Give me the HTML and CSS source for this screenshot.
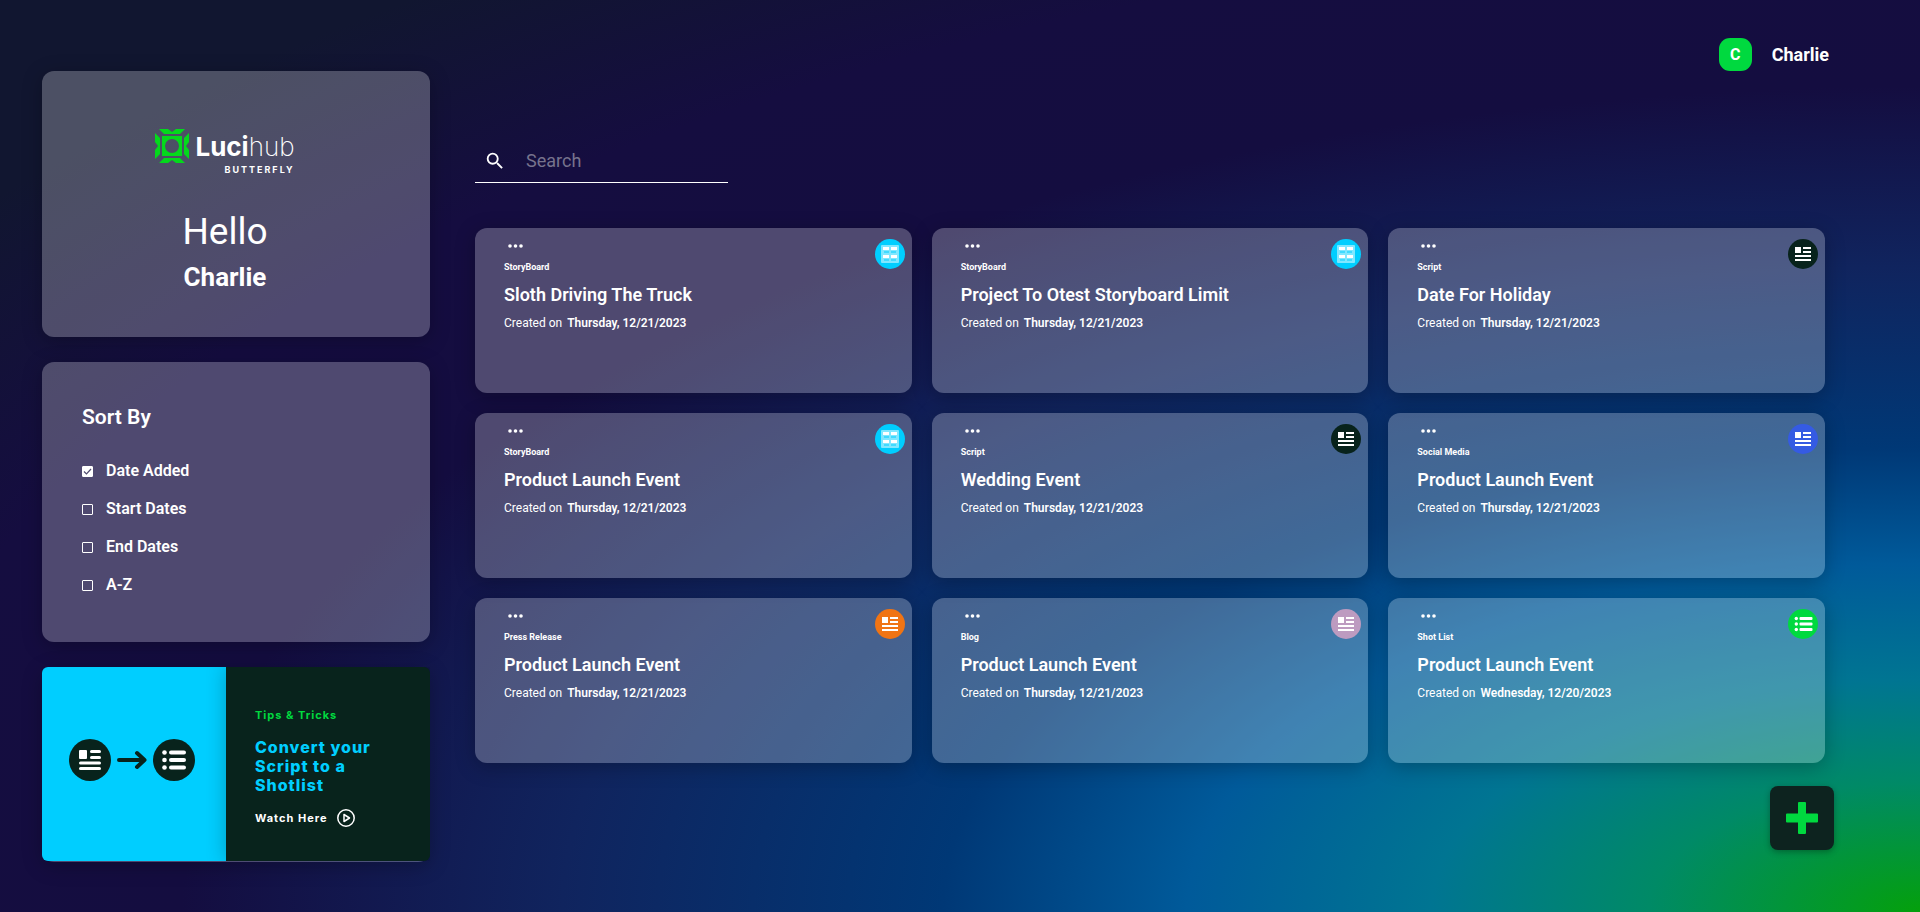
FILE: index.html
```html
<!DOCTYPE html>
<html lang="en">
<head>
<meta charset="utf-8">
<meta name="viewport" content="width=device-width, initial-scale=1">
<title>Lucihub Butterfly</title>
<link rel="stylesheet" href="styles.css">
</head>
<body>
<svg class="sprite" aria-hidden="true">
  <symbol id="dots" viewBox="0 0 16 4"><circle cx="2" cy="2" r="1.8"/><circle cx="7.5" cy="2" r="1.8"/><circle cx="13" cy="2" r="1.8"/></symbol>
  <symbol id="doc" viewBox="0 0 30 30"><path d="M7 8h6v6H7zM15 8h8v2h-8zM15 12h8v2h-8zM7 16h16v2H7zM7 20h16v2H7z"/></symbol>
  <symbol id="list" viewBox="0 0 30 30"><circle cx="8.300" cy="9.500" r="1.700"/><circle cx="8.300" cy="15" r="1.700"/><circle cx="8.300" cy="20.500" r="1.700"/><rect x="11.500" y="8" width="13" height="3" rx="1"/><rect x="11.500" y="13.500" width="13" height="3" rx="1"/><rect x="11.500" y="19" width="13" height="3" rx="1"/></symbol>
  <symbol id="board" viewBox="0 0 30 30"><rect x="6" y="6" width="18" height="18" rx="1" fill-opacity=".5"/><path d="M8 8h6v3H8zM16 8h6v3h-6zM8 16h6v3H8zM16 16h6v3h-6z"/><path d="M9 12.500h5v1H9zM16 12.500h5v1h-5zM9 20.500h5v1H9zM16 20.500h5v1h-5z" fill="#00ceff"/></symbol>
</svg>
<div class="layout">
  <aside class="sidebar">
    <section class="panel hello">
      <div class="logo">
        <svg class="logo-mark" viewBox="0 0 34 34" aria-hidden="true">
          <path fill="#04d91c" fill-rule="evenodd" d="M7 7h20v20H7zM17 10a7 7 0 1 0 0 14a7 7 0 1 0 0-14z"/>
          <path fill="#04d91c" d="M4 0h9l4 3 4-3h9l-5 5H9zM4 34h9l4-3 4 3h9l-5-5H9zM0 4v9l3 4-3 4v9l5-5V9zM34 4v9l-3 4 3 4v9l-5-5V9z"/>
        </svg>
        <div class="logo-text">
          <span class="logo-name">Luci<span class="logo-thin">hub</span></span>
          <span class="logo-sub">BUTTERFLY</span>
        </div>
      </div>
      <p class="hello-word">Hello</p>
      <h1 class="hello-name">Charlie</h1>
    </section>
    <section class="panel sort">
      <h2 class="sort-title">Sort By</h2>
      <label class="option"><input type="checkbox" checked>Date Added</label>
      <label class="option"><input type="checkbox">Start Dates</label>
      <label class="option"><input type="checkbox">End Dates</label>
      <label class="option"><input type="checkbox">A-Z</label>
    </section>
    <section class="panel tips">
      <div class="tips-art">
        <svg class="tips-circle" viewBox="0 0 42 42" aria-hidden="true"><circle cx="21" cy="21" r="21" fill="#08231c"/><g fill="#fff"><rect x="10" y="11" width="8" height="9" rx="1"/><rect x="21" y="11" width="11" height="3" rx="1.500"/><rect x="21" y="17" width="11" height="3" rx="1.500"/><rect x="10" y="22.500" width="22" height="3" rx="1.500"/><rect x="10" y="28" width="22" height="3" rx="1.500"/></g></svg>
        <svg class="tips-arrow" viewBox="0 0 30 20" aria-hidden="true"><path d="M2 10h25M20 3l7.500 7-7.500 7" fill="none" stroke="#08231c" stroke-width="4" stroke-linecap="round" stroke-linejoin="round"/></svg>
        <svg class="tips-circle" viewBox="0 0 42 42" aria-hidden="true"><circle cx="21" cy="21" r="21" fill="#08231c"/><g fill="#fff"><circle cx="11.500" cy="13.500" r="2.300"/><circle cx="11.500" cy="21" r="2.300"/><circle cx="11.500" cy="28.500" r="2.300"/><rect x="16" y="11.500" width="17" height="4" rx="2"/><rect x="16" y="19" width="17" height="4" rx="2"/><rect x="16" y="26.500" width="17" height="4" rx="2"/></g></svg>
      </div>
      <div class="tips-body">
        <p class="tips-label">Tips &amp; Tricks</p>
        <h2 class="tips-title">Convert your Script to a Shotlist</h2>
        <a class="tips-link" href="#watch">Watch Here
          <svg class="play" viewBox="0 0 18 18" aria-hidden="true" fill="none" stroke="#fff" stroke-linejoin="round"><circle cx="9" cy="9" r="8.200" stroke-width="1.500"/><path d="M7 5.500v7L12.500 9z" stroke-width="1.500"/></svg>
        </a>
      </div>
    </section>
  </aside>
  <main class="main">
    <header class="top"><span class="avatar">C</span><span class="user">Charlie</span></header>
    <form class="search">
      <svg class="search-icon" viewBox="0 0 24 24" aria-hidden="true"><path fill="#fff" d="M15.500 14h-.79l-.28-.27A6.471 6.471 0 0 0 16 9.500 6.500 6.500 0 1 0 9.500 16c1.610 0 3.090-.59 4.230-1.570l.27.28v.79l5 4.990L20.490 19l-4.990-5zm-6 0C7.010 14 5 11.990 5 9.500S7.010 5 9.500 5 14 7.010 14 9.500 11.990 14 9.500 14z"/></svg>
      <input class="search-input" type="search" placeholder="Search" aria-label="Search">
    </form>
    <div class="grid">
      <article class="panel card"><button class="menu" aria-label="Options"><svg><use href="#dots"/></svg></button><svg class="badge cyan"><use href="#board"/></svg><p class="kind">StoryBoard</p><h3 class="title">Sloth Driving The Truck</h3><p class="made">Created on <b>Thursday, 12/21/2023</b></p></article>
      <article class="panel card"><button class="menu" aria-label="Options"><svg><use href="#dots"/></svg></button><svg class="badge cyan"><use href="#board"/></svg><p class="kind">StoryBoard</p><h3 class="title">Project To Otest Storyboard Limit</h3><p class="made">Created on <b>Thursday, 12/21/2023</b></p></article>
      <article class="panel card"><button class="menu" aria-label="Options"><svg><use href="#dots"/></svg></button><svg class="badge dark"><use href="#doc"/></svg><p class="kind">Script</p><h3 class="title">Date For Holiday</h3><p class="made">Created on <b>Thursday, 12/21/2023</b></p></article>
      <article class="panel card"><button class="menu" aria-label="Options"><svg><use href="#dots"/></svg></button><svg class="badge cyan"><use href="#board"/></svg><p class="kind">StoryBoard</p><h3 class="title">Product Launch Event</h3><p class="made">Created on <b>Thursday, 12/21/2023</b></p></article>
      <article class="panel card"><button class="menu" aria-label="Options"><svg><use href="#dots"/></svg></button><svg class="badge dark"><use href="#doc"/></svg><p class="kind">Script</p><h3 class="title">Wedding Event</h3><p class="made">Created on <b>Thursday, 12/21/2023</b></p></article>
      <article class="panel card"><button class="menu" aria-label="Options"><svg><use href="#dots"/></svg></button><svg class="badge blue"><use href="#doc"/></svg><p class="kind">Social Media</p><h3 class="title">Product Launch Event</h3><p class="made">Created on <b>Thursday, 12/21/2023</b></p></article>
      <article class="panel card"><button class="menu" aria-label="Options"><svg><use href="#dots"/></svg></button><svg class="badge orange"><use href="#doc"/></svg><p class="kind">Press Release</p><h3 class="title">Product Launch Event</h3><p class="made">Created on <b>Thursday, 12/21/2023</b></p></article>
      <article class="panel card"><button class="menu" aria-label="Options"><svg><use href="#dots"/></svg></button><svg class="badge pink"><use href="#doc"/></svg><p class="kind">Blog</p><h3 class="title">Product Launch Event</h3><p class="made">Created on <b>Thursday, 12/21/2023</b></p></article>
      <article class="panel card"><button class="menu" aria-label="Options"><svg><use href="#dots"/></svg></button><svg class="badge green"><use href="#list"/></svg><p class="kind">Shot List</p><h3 class="title">Product Launch Event</h3><p class="made">Created on <b>Wednesday, 12/20/2023</b></p></article>
    </div>
  </main>
</div>
<button class="fab" aria-label="New project"><svg viewBox="0 0 32 32" aria-hidden="true"><path fill="#00d93f" d="M13 0h6a1 1 0 0 1 1 1v10.500H31a1 1 0 0 1 1 1v7a1 1 0 0 1-1 1H20V31a1 1 0 0 1-1 1h-6a1 1 0 0 1-1-1V20.500H1a1 1 0 0 1-1-1v-7a1 1 0 0 1 1-1h11V1a1 1 0 0 1 1-1z"/></svg></button>
</body>
</html>
```
FILE: styles.css
```css
* { box-sizing: border-box; margin: 0; padding: 0; }

body {
  min-height: 100vh;
  color: #fff;
  font-family: Roboto, "Open Sans", sans-serif;
  background: radial-gradient(ellipse farthest-corner at bottom right,
    #04a00c 0%, #008a66 10%, #007592 18%, #005a9a 27%, #003876 36%, #10245e 50%, #140d40 64%, #150d40 76%, #111630 90%, #111630 100%) no-repeat;
}

.sprite { position: absolute; width: 0; height: 0; }

.layout {
  display: grid;
  grid-template-columns: 388fr 1354fr;
  column-gap: 45px;
  padding: 0 91px 50px 42px;
}

.sidebar { display: flex; flex-direction: column; gap: 25px; padding-top: 71px; }

.panel {
  border-radius: 12px;
  background: rgba(255, 255, 255, .25);
  box-shadow: 0 4px 20px rgba(0, 0, 0, .25);
}

.hello {
  display: flex;
  flex-direction: column;
  align-items: center;
  min-height: 266px;
  padding: 58px 22px 0 0;
}
.logo { display: flex; gap: 6px; }
.logo-mark { width: 34px; height: 34px; }
.logo-text {
  display: flex;
  flex-direction: column;
  align-items: flex-end;
  font-family: Inter, sans-serif;
  font-weight: 700;
}
.logo-name { font-size: 26px; line-height: 35px; }
.logo-thin { font-weight: 200; }
.logo-sub { font-size: 9px; line-height: 12px; letter-spacing: 2px; }
.hello-word { margin-top: 32px; font-size: 37px; line-height: 48px; }
.hello-name { margin-top: 5px; font-size: 26px; line-height: 32px; }

.sort { display: flex; flex-direction: column; min-height: 280px; padding: 42px 40px 30px; }
.sort-title { margin-bottom: 22px; font-size: 21px; font-weight: 600; line-height: 26px; }
.option {
  display: flex;
  align-items: center;
  gap: 13px;
  font-size: 16px;
  font-weight: 600;
  line-height: 38px;
}
.option input {
  appearance: none;
  width: 11px;
  height: 11px;
  border: 1px solid #fff;
  border-radius: 1px;
}
.option input:checked {
  background: #fff url("data:image/svg+xml,%3Csvg xmlns='http://www.w3.org/2000/svg' viewBox='0 0 9 9'%3E%3Cpath d='M1 4.500l2.500 2.500L8 2' fill='none' stroke='%23524d70' stroke-width='1.200'/%3E%3C/svg%3E");
}

.tips { display: flex; min-height: 195px; padding-bottom: 1px; }
.tips-art {
  flex: none;
  display: flex;
  align-items: center;
  justify-content: center;
  gap: 6px;
  width: 47.4%;
  padding: 0 3px 8px 0;
  border-radius: 6px 0 0 6px;
  background: #00ceff;
}
.tips-circle { flex: none; width: 42px; height: 42px; }
.tips-arrow { flex: none; width: 30px; height: 20px; }
.tips-body {
  flex: 1;
  min-width: 0;
  padding: 40px 50px 0 29px;
  border-radius: 0 6px 6px 0;
  background: #08231c;
  box-shadow: 0 0 20px rgba(0, 0, 0, .25);
  clip-path: inset(0 0 0 -20px);
  font-family: Inter, sans-serif;
  font-weight: 700;
  letter-spacing: 1px;
}
.tips-label { color: #00d93f; font-size: 11px; line-height: 16px; }
.tips-title { margin: 15px 0 14px; color: #00ceff; font-size: 16px; font-weight: 800; line-height: 19px; }
.tips-link {
  display: flex;
  align-items: center;
  gap: 10px;
  color: #fff;
  font-size: 11px;
  line-height: 18px;
  text-decoration: none;
}
.play { width: 18px; height: 18px; }

.top { display: flex; align-items: center; justify-content: flex-end; gap: 20px; padding-top: 38px; }
.avatar {
  width: 33px;
  border-radius: 11px;
  background: #00d93f;
  font-size: 16px;
  font-weight: 700;
  line-height: 33px;
  text-align: center;
}
.user { font-size: 18px; font-weight: 700; }

.search {
  display: flex;
  align-items: center;
  gap: 20px;
  width: 253px;
  height: 42px;
  margin: 70px 0 45px;
  padding: 0 0 2px 9px;
  border-bottom: 1px solid #fff;
}
.search-icon { flex: none; width: 22px; height: 22px; }
.search-input {
  flex: 1;
  min-width: 0;
  border: 0;
  outline: 0;
  background: none;
  color: #fff;
  font: 18px/24px Roboto, sans-serif;
}
.search-input::placeholder { color: #77738d; }

.grid { display: grid; grid-template-columns: repeat(3, 1fr); gap: 20px; margin-right: 4px; }
.card { position: relative; min-height: 165px; padding: 14px 29px; }
.menu { display: block; height: 8px; margin-left: 4px; border: 0; background: none; }
.menu svg { display: block; width: 16px; height: 8px; fill: #fff; }
.badge { position: absolute; top: 11px; right: 7px; width: 30px; height: 30px; border-radius: 50%; fill: #fff; }
.cyan { background: #00ceff; }
.dark { background: #08231c; }
.blue { background: #355be3; }
.orange { background: #f07414; }
.pink { background: #bd9bc0; }
.green { background: #00d93f; }
.kind { margin-top: 11px; font-size: 9px; font-weight: 700; line-height: 12px; }
.title { margin-top: 10px; font-size: 18px; font-weight: 600; line-height: 24px; }
.made { margin-top: 8px; font-size: 12px; line-height: 16px; }
.made b { margin-left: 2px; font-weight: 600; }

.fab {
  position: fixed;
  right: 86px;
  bottom: 62px;
  display: grid;
  place-items: center;
  width: 64px;
  height: 64px;
  border: 0;
  border-radius: 8px;
  background: #0d231f;
  box-shadow: 0 2px 6px rgba(0, 0, 0, .3);
}
.fab svg { width: 32px; height: 32px; }
```
